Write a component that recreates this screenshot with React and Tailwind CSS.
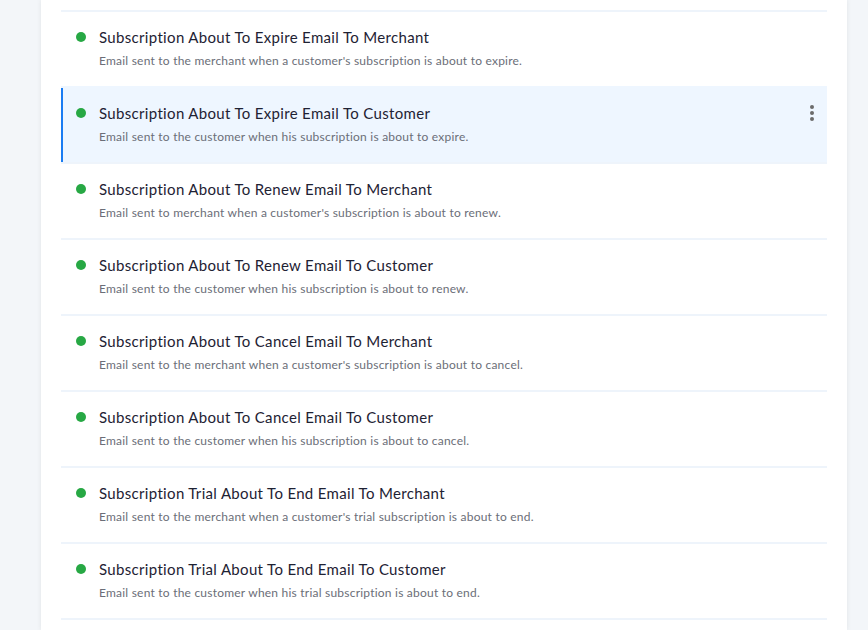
import React from "react";

const rows = [
  ["Subscription About To Expire Email To Merchant", "Email sent to the merchant when a customer's subscription is about to expire."],
  ["Subscription About To Expire Email To Customer", "Email sent to the customer when his subscription is about to expire.", true],
  ["Subscription About To Renew Email To Merchant", "Email sent to merchant when a customer's subscription is about to renew."],
  ["Subscription About To Renew Email To Customer", "Email sent to the customer when his subscription is about to renew."],
  ["Subscription About To Cancel Email To Merchant", "Email sent to the merchant when a customer's subscription is about to cancel."],
  ["Subscription About To Cancel Email To Customer", "Email sent to the customer when his subscription is about to cancel."],
  ["Subscription Trial About To End Email To Merchant", "Email sent to the merchant when a customer's trial subscription is about to end."],
  ["Subscription Trial About To End Email To Customer", "Email sent to the customer when his trial subscription is about to end."],
];

function Row({ title, desc, active }) {
  return (
    <div
      className={
        "relative flex h-[76px] border-t-2 " +
        (active ? "border-[#eef6ff] bg-[#eef6ff]" : "border-[#eef4fb] bg-white")
      }
    >
      {active && <div className="absolute left-0 top-0 bottom-0 w-[2px] bg-[#1a7cf2]" />}
      <div className="flex flex-1 items-start pl-[15px] pt-[15px]">
        <div className="mt-[5px] h-[10px] w-[10px] shrink-0 rounded-full bg-[#27a844]" />
        <div className="ml-[13px] flex flex-col">
          <div className="text-[15px] leading-[20px] tracking-[0.33px] text-[#1e2233]">{title}</div>
          <div className="mt-[7px] text-[12px] leading-[14px] tracking-[0.22px] text-[#6b6e78]">{desc}</div>
        </div>
      </div>
      {active && (
        <div className="flex flex-col gap-[2px] pr-[13px] pt-[17px]">
          <div className="h-[4px] w-[4px] rounded-full bg-[#6b6b6b]" />
          <div className="h-[4px] w-[4px] rounded-full bg-[#6b6b6b]" />
          <div className="h-[4px] w-[4px] rounded-full bg-[#6b6b6b]" />
        </div>
      )}
    </div>
  );
}

export default function App() {
  return (
    <div
      className="h-[630px] w-[868px] overflow-hidden bg-[#f3f6f9]"
      style={{ fontFamily: "Lato, 'Noto Sans', sans-serif" }}
    >
      <div className="ml-[41px] h-[630px] w-[806px] bg-white px-[20px] pt-[10px] shadow-[0_0_5px_rgba(0,0,0,0.08)]">
        {rows.map(([t, d, a], i) => (
          <Row key={i} title={t} desc={d} active={a} />
        ))}
        <div className="border-t-2 border-[#eef4fb]" />
      </div>
    </div>
  );
}
